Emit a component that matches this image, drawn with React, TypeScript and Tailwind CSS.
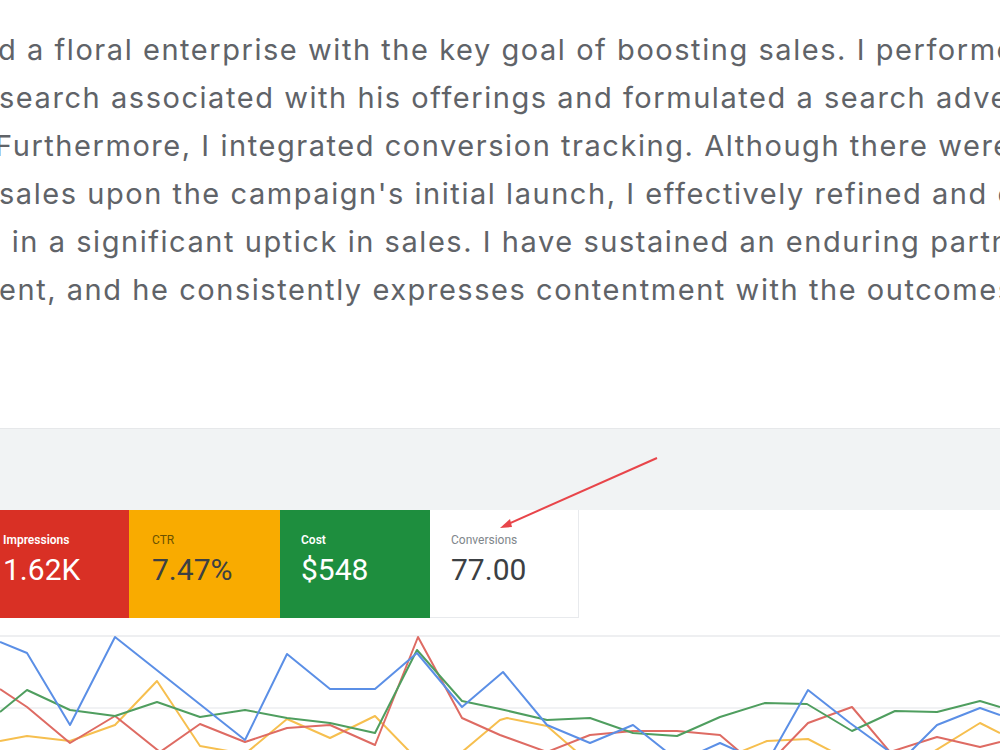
import { FC } from "react";

const lines: { text: string; ml: string }[] = [
  { text: "d a floral enterprise with the key goal of boosting sales. I performed", ml: "-ml-[2px]" },
  { text: "search associated with his offerings and formulated a search advert", ml: "-ml-[1px]" },
  { text: "Furthermore, I integrated conversion tracking. Although there were", ml: "-ml-[5px]" },
  { text: "sales upon the campaign's initial launch, I effectively refined and opt", ml: "-ml-[1px]" },
  { text: " in a significant uptick in sales. I have sustained an enduring partner", ml: "ml-[2px]" },
  { text: "ent, and he consistently expresses contentment with the outcomes.", ml: "-ml-[1px]" },
];

type Tile = { label: string; value: string; bg: string; labelCls: string; valueCls: string; width: string };

const tiles: Tile[] = [
  { label: "Impressions", value: "1.62K", bg: "bg-[#d93025]", labelCls: "text-white font-semibold", valueCls: "text-white", width: "w-[129px] pl-[3px]" },
  { label: "CTR", value: "7.47%", bg: "bg-[#f9ab00]", labelCls: "text-[#6b5200]", valueCls: "text-[#3c4043]", width: "w-[151px] pl-[23px]" },
  { label: "Cost", value: "$548", bg: "bg-[#1e8e3e]", labelCls: "text-white font-semibold", valueCls: "text-white", width: "w-[150px] pl-[21px]" },
  { label: "Conversions", value: "77.00", bg: "bg-white border-r border-b border-[#e8eaed]", labelCls: "text-[#80868b]", valueCls: "text-[#3c4043]", width: "w-[149px] pl-[21px]" },
];

const series = {
  blue: "0,642 27,653 70,725 115,637 245,740 287,654 330,689 375,689 417,653 462,707 503,672 547,725 590,743 633,725 667,752 700,752 720,743 740,752 773,752 808,690 850,723 890,752 910,752 937,725 980,708 1000,715",
  green: "0,712 27,690 70,710 115,716 157,702 200,717 245,710 287,718 330,723 375,733 417,650 462,701 500,709 547,720 590,718 633,733 677,736 720,717 765,703 807,704 852,731 895,711 937,712 980,701 1000,707",
  red: "0,689 27,707 70,743 115,716 160,752 200,724 245,742 287,728 330,725 375,745 418,637 462,718 500,735 547,752 590,735 633,731 677,731 720,735 740,752 780,752 808,723 852,707 890,752 937,737 980,747 1000,742",
  yellow: "0,741 27,736 70,741 115,725 157,681 200,746 245,754 287,719 330,738 375,716 410,752 462,752 500,720 507,718 547,726 577,752 740,752 767,741 808,739 833,752 933,752 980,723 1000,733",
};

const shift = (pts: string) =>
  pts
    .split(" ")
    .map((p) => {
      const [x, y] = p.split(",").map(Number);
      return `${x},${y - 618}`;
    })
    .join(" ");

const App: FC = () => {
  return (
    <div className="relative w-[1000px] h-[750px] overflow-hidden bg-white">
      <div
        className="pt-[26px] text-[29px] leading-[48px] tracking-[1.55px] text-[#606368]"
        style={{ fontFamily: "Inter, 'Open Sans', sans-serif" }}
      >
        {lines.map((l, i) => (
          <div key={i} className={`whitespace-pre ${l.ml}`}>
            {l.text}
          </div>
        ))}
      </div>

      <div className="mt-[114px] h-[82px] bg-[#f1f3f4] border-t border-[#e6e8ea]" />

      <div className="flex h-[108px]" style={{ fontFamily: "Roboto, sans-serif" }}>
        {tiles.map((t) => (
          <div key={t.label} className={`${t.bg} ${t.width} flex flex-col pt-[23px]`}>
            <span className={`text-[12px] leading-[14px] ${t.labelCls}`}>{t.label}</span>
            <span className={`text-[30px] leading-[36px] mt-[5px] ${t.valueCls}`}>{t.value}</span>
          </div>
        ))}
      </div>

      <svg className="block" width="1000" height="132" viewBox="0 0 1000 132">
        <line x1="0" y1="18" x2="1000" y2="18" stroke="#e8eaed" strokeWidth="1.5" />
        <line x1="0" y1="90" x2="1000" y2="90" stroke="#eceef0" strokeWidth="1.5" />
        <polyline points={shift(series.yellow)} fill="none" stroke="#f6bf4f" strokeWidth="2" strokeLinejoin="round" />
        <polyline points={shift(series.red)} fill="none" stroke="#de6b63" strokeWidth="2" strokeLinejoin="round" />
        <polyline points={shift(series.green)} fill="none" stroke="#4f9e5f" strokeWidth="2" strokeLinejoin="round" />
        <polyline points={shift(series.blue)} fill="none" stroke="#5b8fe6" strokeWidth="2" strokeLinejoin="round" />
      </svg>

      <svg className="absolute left-0 top-0 pointer-events-none" width="1000" height="750">
        <line x1="657" y1="458" x2="508" y2="524" stroke="#e8454a" strokeWidth="2" />
        <polygon points="500,528 510,519 512,527" fill="#e8454a" />
      </svg>
    </div>
  );
};

export default App;
